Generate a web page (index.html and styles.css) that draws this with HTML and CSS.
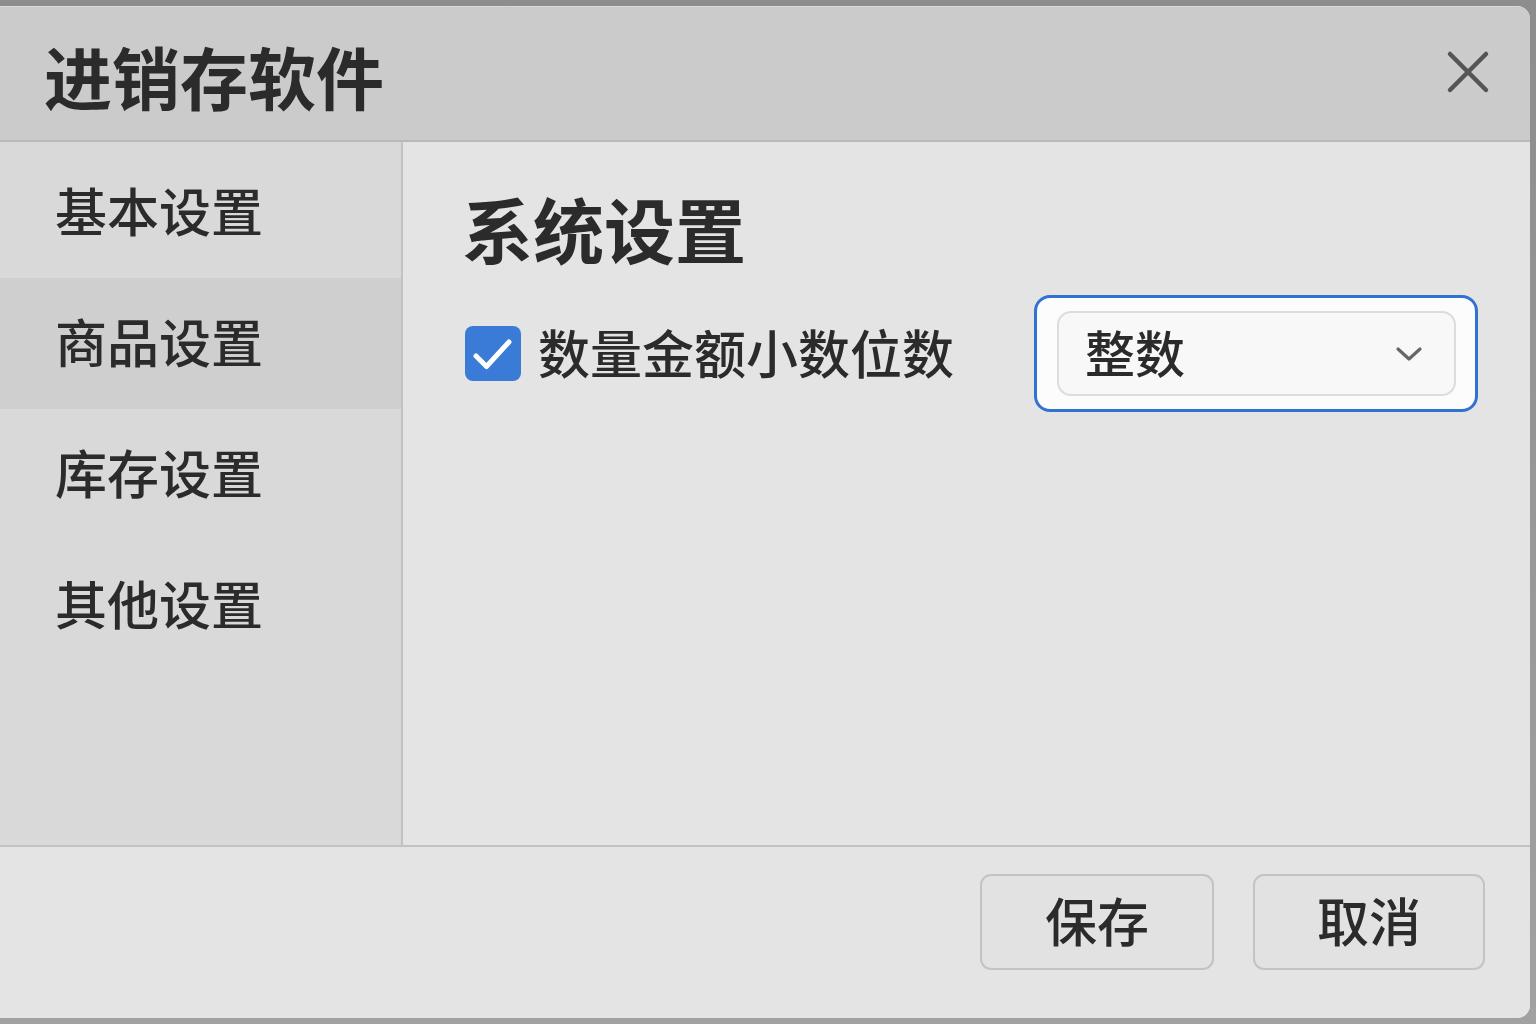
FILE: index.html
```html
<!DOCTYPE html>
<html lang="zh-CN">
<head>
<meta charset="utf-8">
<title>进销存软件</title>
<link rel="stylesheet" href="styles.css">
</head>
<body>
<div class="dialog">
  <header class="titlebar">
    <h1 class="title">进销存软件</h1>
    <button class="close" aria-label="关闭">
      <svg width="44" height="44" viewBox="0 0 44 44"><path d="M4 4 L40 40 M40 4 L4 40" stroke="#555" stroke-width="4.5" stroke-linecap="round" fill="none"/></svg>
    </button>
  </header>
  <div class="main">
    <nav class="sidebar">
      <div class="nav-item">基本设置</div>
      <div class="nav-item active">商品设置</div>
      <div class="nav-item">库存设置</div>
      <div class="nav-item">其他设置</div>
    </nav>
    <section class="content">
      <h2 class="heading">系统设置</h2>
      <div class="row">
        <span class="checkbox">
          <svg width="55" height="55" viewBox="0 0 55 55"><path d="M11 30 L21.5 40.5 L44 16" stroke="#fff" stroke-width="5" stroke-linecap="round" stroke-linejoin="round" fill="none"/></svg>
        </span>
        <span class="label">数量金额小数位数</span>
        <div class="select-wrap">
          <div class="select">
            <span class="select-text">整数</span>
            <svg class="chev" width="28" height="16" viewBox="0 0 28 16"><path d="M3 3 L14 13 L25 3" stroke="#666" stroke-width="3.2" stroke-linecap="round" stroke-linejoin="round" fill="none"/></svg>
          </div>
        </div>
      </div>
    </section>
  </div>
  <footer class="footer">
    <button class="btn">保存</button>
    <button class="btn">取消</button>
  </footer>
</div>
</body>
</html>
```

FILE: styles.css
```css
* { box-sizing: border-box; }
html, body { margin: 0; padding: 0; }
body {
  width: 1536px;
  height: 1024px;
  background: linear-gradient(#8d8d8d, #a1a1a1);
  font-family: "Noto Sans CJK SC", "Noto Sans", sans-serif;
  color: #2b2b2b;
  overflow: hidden;
  padding-top: 6px;
}
.dialog {
  width: 1530px;
  height: 1012px;
  border-radius: 0 13px 13px 0;
  overflow: hidden;
  display: flex;
  flex-direction: column;
  background: #e4e4e4;
}
.titlebar {
  height: 136px;
  flex: none;
  background: #cbcbcb;
  border-top: 1px solid #dadada;
  border-bottom: 2px solid #b9b9b9;
  display: flex;
  align-items: center;
  justify-content: space-between;
  padding: 0 40px 0 44px;
}
.title {
  margin: 0;
  font-size: 68px;
  line-height: 1;
  font-weight: 700;
  position: relative;
  top: 2px;
}
.close {
  border: 0;
  background: none;
  padding: 0;
  width: 44px;
  height: 44px;
  display: flex;
  position: relative;
  top: -2px;
}
.main {
  flex: 1;
  display: flex;
  min-height: 0;
}
.sidebar {
  width: 403px;
  flex: none;
  background: #d9d9d9;
  border-right: 2px solid #c2c2c2;
  padding-top: 5px;
}
.nav-item {
  height: 131px;
  display: flex;
  align-items: center;
  padding: 0 0 6px 55px;
  font-size: 52px;
  font-weight: 500;
  line-height: 1;
}
.nav-item.active { background: #cfcfcf; }
.content {
  flex: 1;
  background: #e4e4e4;
  padding: 0 52px 0 59px;
}
.heading {
  margin: 50px 0 0;
  font-size: 71px;
  line-height: 70px;
  height: 70px;
  font-weight: 700;
}
.row {
  margin-top: 33px;
  display: flex;
  align-items: center;
}
.checkbox {
  width: 56px;
  height: 55px;
  background: #3a7bd8;
  border-radius: 8px;
  display: flex;
  flex: none;
  margin-left: 3px;
  margin-right: 17px;
}
.label {
  font-size: 52px;
  line-height: 1;
  font-weight: 500;
  padding-bottom: 4px;
}
.select-wrap {
  margin-left: auto;
  width: 444px;
  height: 117px;
  border: 3px solid #2f72d2;
  border-radius: 16px;
  background: #fcfcfc;
  padding: 13px 19px 13px 20px;
}
.select {
  height: 85px;
  border: 2px solid #dcdcdc;
  border-radius: 14px;
  background: #f8f8f8;
  display: flex;
  align-items: center;
  justify-content: space-between;
  padding: 0 31px 0 26px;
}
.select-text {
  font-size: 50px;
  line-height: 1;
  font-weight: 500;
  padding-bottom: 6px;
}
.chev { flex: none; }
.footer {
  height: 173px;
  flex: none;
  border-top: 2px solid #c2c2c2;
  background: #e4e4e4;
  display: flex;
  justify-content: flex-end;
  align-items: flex-start;
  gap: 39px;
  padding: 27px 45px 0 0;
}
.btn {
  width: 234px;
  height: 96px;
  border: 2px solid #c3c3c3;
  border-radius: 11px;
  background: #e2e2e2;
  font-family: inherit;
  font-size: 52px;
  font-weight: 500;
  line-height: 1;
  color: #2b2b2b;
  padding: 0 0 4px;
}
.btn + .btn { width: 232px; }
```
